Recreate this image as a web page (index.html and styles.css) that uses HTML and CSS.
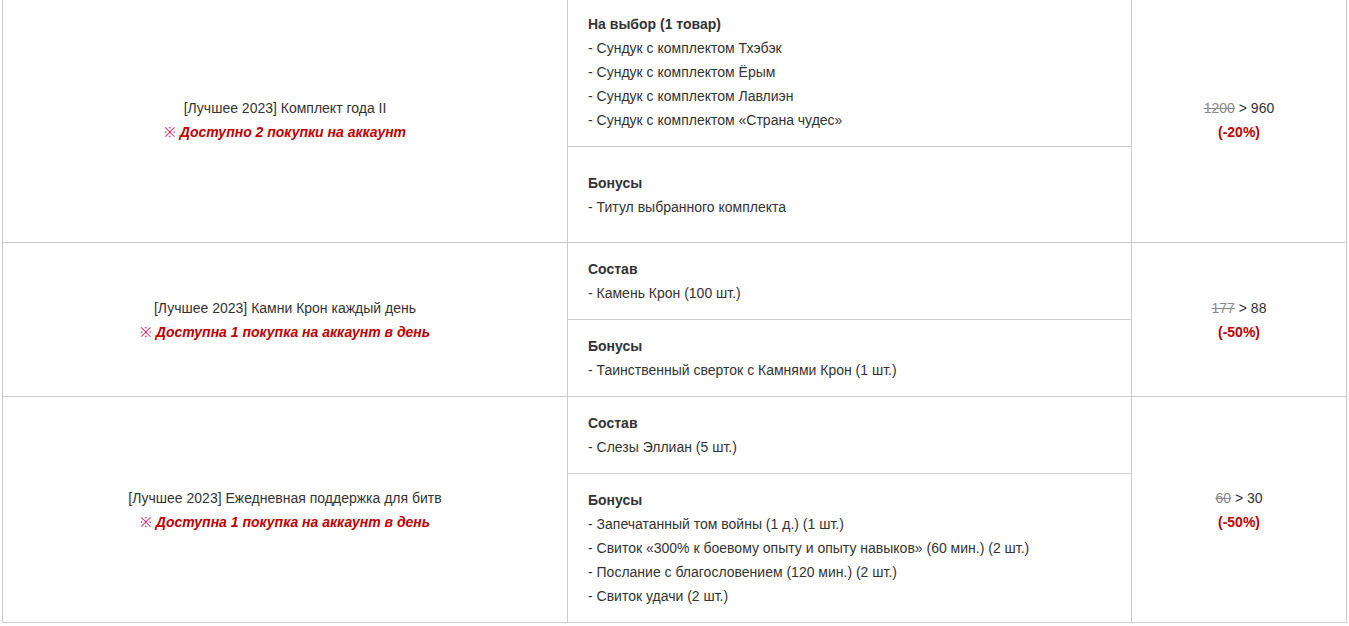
FILE: index.html
```html
<!DOCTYPE html>
<html lang="ru">
<head>
<meta charset="utf-8">
<title>Товары</title>
<link rel="stylesheet" href="styles.css">
</head>
<body>
<div class="wrap">
<table class="shop">
  <tbody>
    <tr>
      <td class="name" rowspan="2">
        <p>[Лучшее 2023] Комплект года II</p>
        <p class="limit"><span class="mark">※</span> Доступно 2 покупки на аккаунт</p>
      </td>
      <td class="items">
        <p class="head">На выбор (1 товар)</p>
        <p>- Сундук с комплектом Тхэбэк</p>
        <p>- Сундук с комплектом Ёрым</p>
        <p>- Сундук с комплектом Лавлиэн</p>
        <p>- Сундук с комплектом «Страна чудес»</p>
      </td>
      <td class="price" rowspan="2">
        <p><s>1200</s> &gt; 960</p>
        <p class="off">(-20%)</p>
      </td>
    </tr>
    <tr>
      <td class="items items-tall">
        <p class="head">Бонусы</p>
        <p>- Титул выбранного комплекта</p>
      </td>
    </tr>
    <tr>
      <td class="name" rowspan="2">
        <p>[Лучшее 2023] Камни Крон каждый день</p>
        <p class="limit"><span class="mark">※</span> Доступна 1 покупка на аккаунт в день</p>
      </td>
      <td class="items">
        <p class="head">Состав</p>
        <p>- Камень Крон (100 шт.)</p>
      </td>
      <td class="price" rowspan="2">
        <p><s>177</s> &gt; 88</p>
        <p class="off">(-50%)</p>
      </td>
    </tr>
    <tr>
      <td class="items">
        <p class="head">Бонусы</p>
        <p>- Таинственный сверток с Камнями Крон (1 шт.)</p>
      </td>
    </tr>
    <tr>
      <td class="name" rowspan="2">
        <p>[Лучшее 2023] Ежедневная поддержка для битв</p>
        <p class="limit"><span class="mark">※</span> Доступна 1 покупка на аккаунт в день</p>
      </td>
      <td class="items">
        <p class="head">Состав</p>
        <p>- Слезы Эллиан (5 шт.)</p>
      </td>
      <td class="price" rowspan="2">
        <p><s>60</s> &gt; 30</p>
        <p class="off">(-50%)</p>
      </td>
    </tr>
    <tr>
      <td class="items">
        <p class="head">Бонусы</p>
        <p>- Запечатанный том войны (1 д.) (1 шт.)</p>
        <p>- Свиток «300% к боевому опыту и опыту навыков» (60 мин.) (2 шт.)</p>
        <p>- Послание с благословением (120 мин.) (2 шт.)</p>
        <p>- Свиток удачи (2 шт.)</p>
      </td>
    </tr>
  </tbody>
</table>
</div>
</body>
</html>
```
FILE: styles.css
```css
html, body {
  margin: 0;
  padding: 0;
  background: #ffffff;
}

body {
  font-family: "Liberation Sans", Arial, Helvetica, sans-serif;
  font-size: 14px;
  line-height: 24px;
  color: #333333;
}

.wrap {
  padding-left: 2px;
  margin-top: -3px;
}

.shop {
  border-collapse: collapse;
  width: 1345px;
  table-layout: fixed;
}

.shop td {
  border: 1px solid #cccccc;
  vertical-align: middle;
}

.shop p {
  margin: 0;
}

.name {
  width: 564px;
  padding: 0;
  text-align: center;
}

.items {
  width: 523px;
  padding: 14px 20px 14px 20px;
  text-align: left;
}

.items-tall {
  padding-top: 24px;
  padding-bottom: 23px;
}

.price {
  padding: 0;
  text-align: center;
}

.head {
  font-weight: bold;
}

.limit {
  color: #c00000;
  font-weight: bold;
  font-style: italic;
}

.mark {
  font-weight: normal;
  font-style: normal;
  color: #cc3380;
}

.price s {
  color: #888888;
}

.off {
  color: #c00000;
  font-weight: bold;
}
```
